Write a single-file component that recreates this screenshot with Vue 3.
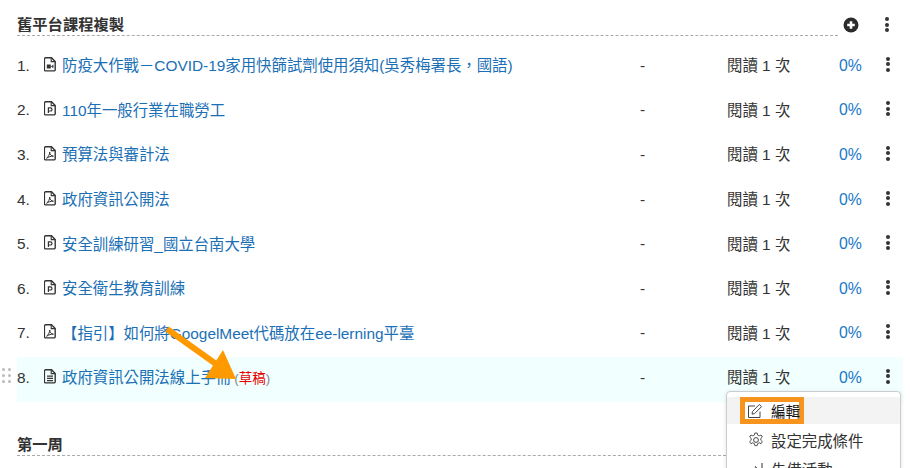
<template>
  <div class="page">
    <!-- 區段標題 -->
    <div class="section-head">
      <h3 class="section-title">舊平台課程複製</h3>
      <div class="head-actions">
        <svg class="plus-icon" viewBox="0 0 16 16" width="16" height="16">
          <circle cx="8" cy="8" r="7.5" fill="#2b2b2b" />
          <path d="M8 4.2v7.6M4.2 8h7.6" stroke="#fff" stroke-width="2.6" />
        </svg>
        <span class="dots"><i></i><i></i><i></i></span>
      </div>
    </div>

    <ol class="rows">
      <li v-for="(item, i) in items" :key="i" class="row" :class="{ active: item.draft }">
        <span v-if="item.draft" class="grip"><i v-for="n in 6" :key="n"></i></span>
        <span class="num">{{ i + 1 }}.</span>
        <svg class="file-icon" viewBox="0 0 12 15" width="12" height="15">
          <path d="M1.6 .8h5.9l3.7 3.7v8.2a1.2 1.2 0 0 1-1.2 1.2H1.6a1.2 1.2 0 0 1-1.2-1.2V2a1.2 1.2 0 0 1 1.2-1.2z" fill="none" stroke="#333" stroke-width="1.4" />
          <path d="M7.2 1v3.6h3.8" fill="none" stroke="#333" stroke-width="1.1" />
          <path v-if="item.type === 'video'" d="M2.8 7.4h4v4h-4zM7 9.4l2.4-1.8v3.6z" fill="#333" />
          <path v-else-if="item.type === 'ppt'" d="M4.4 12V6.8h2a1.5 1.5 0 0 1 0 3.2h-2" fill="none" stroke="#333" stroke-width="1.2" />
          <path v-else-if="item.type === 'pdf'" d="M2.6 12.2c1.6-1 3-3.6 3.1-6.2.1 2.4 1.4 3.9 3.7 4.2-2.4-.1-4.6.6-6.8 2z" fill="none" stroke="#333" stroke-width="1" />
          <path v-else d="M3 7.2h6M3 9.4h6M3 11.6h6" stroke="#333" stroke-width="1.2" />
        </svg>
        <span class="title">
          <a class="link">{{ item.name }}</a>
          <span v-if="item.draft" class="draft">(<b>草稿</b>)</span>
        </span>
        <span class="dash">-</span>
        <span class="reads">閱讀 1 次</span>
        <span class="percent">0%</span>
        <span class="dots"><i></i><i></i><i></i></span>
      </li>
    </ol>

    <div class="section-head second">
      <h3 class="section-title">第一周</h3>
    </div>

    <!-- 下拉選單 -->
    <div class="menu">
      <div class="menu-item hover">
        <span class="highlight">
          <svg viewBox="0 0 16 16" width="16" height="16">
            <path d="M13 8.5V14.5H1.5V3H8" fill="none" stroke="#444" stroke-width="1" />
            <path d="M5.5 8.5L12.3 1.5l2.2 2.2-6.9 6.9-2.6.5z" fill="none" stroke="#444" stroke-width="1" />
          </svg>
          <span class="highlight-text">編輯</span>
        </span>
      </div>
      <div class="menu-item">
        <svg class="menu-icon" viewBox="0 0 16 16" width="16" height="16">
          <circle cx="8" cy="8" r="2.4" fill="none" stroke="#444" />
          <path d="M6.8 1h2.4l.4 2 1.6.8 1.9-.8 1.2 2-1.5 1.4v1.8l1.5 1.4-1.2 2-1.9-.8-1.6.8-.4 2H6.8l-.4-2-1.6-.8-1.9.8-1.2-2 1.5-1.4V6.4L1.7 5l1.2-2 1.9.8 1.6-.8z" fill="none" stroke="#444" stroke-width=".9" />
        </svg>
        <span>設定完成條件</span>
      </div>
      <div class="menu-item">
        <svg class="menu-icon" viewBox="0 0 16 16" width="16" height="16">
          <path d="M1 9h9M7 5.5L10.5 9 7 12.5M14 2v14" fill="none" stroke="#444" stroke-width="1.1" />
        </svg>
        <span>先備活動</span>
      </div>
    </div>

    <!-- 標註箭頭 -->
    <svg class="arrow" viewBox="0 0 910 468" width="910" height="468">
      <path d="M167 329L216 364" stroke="#f90" stroke-width="6" />
      <path d="M236 379L205 378L223 350z" fill="#f90" />
    </svg>
  </div>
</template>

<script setup>
const items = [
  { name: '防疫大作戰－COVID-19家用快篩試劑使用須知(吳秀梅署長，國語)', type: 'video' },
  { name: '110年一般行業在職勞工', type: 'ppt' },
  { name: '預算法與審計法', type: 'pdf' },
  { name: '政府資訊公開法', type: 'pdf' },
  { name: '安全訓練研習_國立台南大學', type: 'ppt' },
  { name: '安全衛生教育訓練', type: 'ppt' },
  { name: '【指引】如何將GoogelMeet代碼放在ee-lerning平臺', type: 'pdf' },
  { name: '政府資訊公開法線上手冊', type: 'doc', draft: true }
]
</script>

<style>
body {
  overflow: hidden;
  background: #fff;
}
</style>

<style scoped>
.page {
  position: relative;
  z-index: 0;
  width: 910px;
  height: 468px;
  padding: 14px 7px 0 17px;
  box-sizing: border-box;
  overflow: hidden;
  font-family: "Liberation Sans", "Noto Sans CJK TC", sans-serif;
  font-size: 15.4px;
  color: #333;
}

.section-head {
  display: flex;
  align-items: flex-start;
  height: 22px;
}

.section-title {
  flex: 0 0 821px;
  height: 21px;
  margin: 0;
  font-size: 15.3px;
  font-weight: 700;
  line-height: 21px;
  color: #333;
  border-bottom: 1px dashed #aaa;
}

.head-actions {
  display: flex;
  align-items: center;
  height: 21px;
  margin-left: 5px;
}

.plus-icon {
  margin-right: 26px;
}

.rows {
  margin: 6px 0 0;
  padding: 0;
  list-style: none;
}

.row {
  position: relative;
  display: flex;
  align-items: center;
  height: 44.6px;
}

.row.active::before {
  content: "";
  position: absolute;
  inset: 3px 0 -3px;
  z-index: -1;
  background: #f1fffe;
}

.grip {
  position: absolute;
  left: -15px;
  top: 14px;
  display: grid;
  grid-template-columns: 3px 3px;
  gap: 3px;
}

.grip i {
  width: 3px;
  height: 3px;
  background: #bbb;
  border-radius: 50%;
}

.num {
  width: 27px;
  padding-top: 3px;
}

.file-icon {
  flex: none;
  margin-right: 6px;
}

.title {
  flex: 0 0 578px;
  white-space: nowrap;
}

.link {
  color: #1a6fb5;
}

.draft {
  margin-left: 3px;
  font-size: 13.5px;
  color: #888;
}

.draft b {
  font-weight: 400;
  color: #e60000;
}

.dash {
  width: 87px;
  padding-top: 3px;
}

.reads {
  width: 112px;
}

.percent {
  width: 38px;
  margin-right: 9px;
  padding-top: 3px;
  font-size: 15.8px;
  color: #1a78c8;
}

.dots {
  display: flex;
  flex-direction: column;
  gap: 1.5px;
  width: 4px;
}

.dots i {
  width: 4px;
  height: 4px;
  background: #333;
  border-radius: 50%;
}

.section-head.second {
  margin-top: 35px;
}

.second .section-title {
  flex-basis: 709px;
}

.menu {
  position: absolute;
  left: 726px;
  top: 391px;
  width: 175px;
  height: 100px;
  padding-top: 5px;
  box-sizing: border-box;
  background: #fff;
  border: 1px solid #ccc;
  border-radius: 4px;
  box-shadow: 0 1px 4px rgba(0, 0, 0, 0.12);
}

.menu-item {
  display: flex;
  align-items: center;
  gap: 7px;
  height: 27px;
  padding-left: 21px;
  color: #333;
  white-space: nowrap;
}

.menu-item.hover {
  padding-left: 13px;
  background: #f3f3f3;
  color: #111;
}

.highlight {
  display: flex;
  align-items: center;
  gap: 8px;
  width: 64px;
  height: 27px;
  padding-left: 2px;
  box-sizing: border-box;
  border: 5px solid #f7941d;
  background: #fff;
}

.highlight svg {
  flex: none;
}

.highlight-text {
  font-size: 14.5px;
}

.menu-item + .menu-item {
  margin-top: 2px;
}

.arrow {
  position: absolute;
  left: 0;
  top: 0;
  pointer-events: none;
}
</style>
